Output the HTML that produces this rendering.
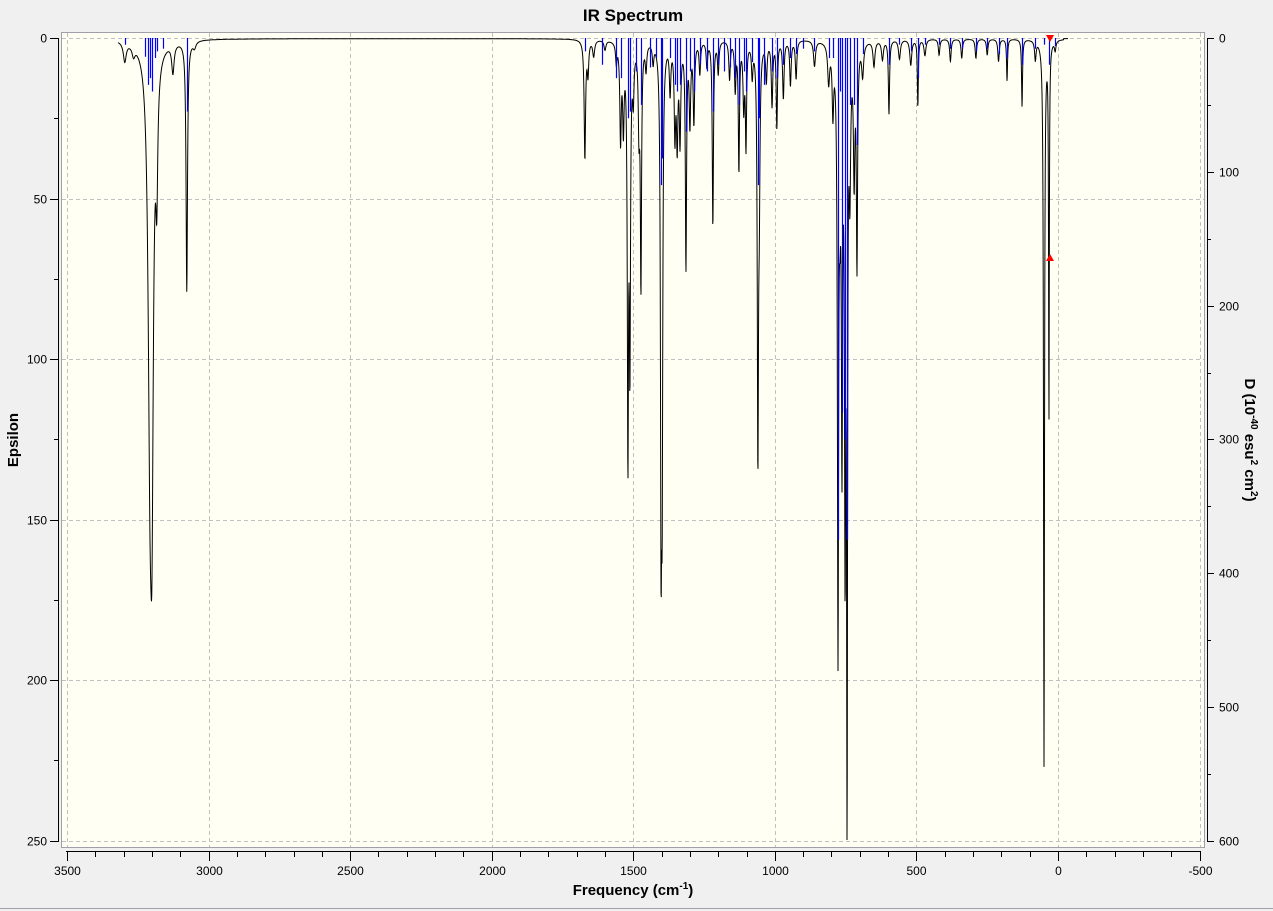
<!DOCTYPE html>
<html><head><meta charset="utf-8"><style>
html,body{margin:0;padding:0;background:#f0f0f0;width:1273px;height:911px;overflow:hidden}
svg{display:block;font-family:"Liberation Sans",sans-serif}
</style></head><body>
<svg id="s" width="1273" height="911" xmlns="http://www.w3.org/2000/svg">
<rect x="0" y="0" width="1273" height="911" fill="#f0f0f0"/>
<line x1="0" y1="908.5" x2="1273" y2="908.5" stroke="#a0a0a8" stroke-width="1"/>
<rect x="61.5" y="32.5" width="1143" height="815" fill="#fffff4" stroke="#a0a0a8" stroke-width="1"/>
<g id="grid" stroke="#c0c0c0" stroke-dasharray="4,3" stroke-width="1"></g>
<path id="curve" fill="none" stroke="#000" stroke-width="1"/>
<g id="sticks" stroke="#0000ff" stroke-width="1.2"></g>
<polygon points="1046,35 1054,35 1050,42" fill="#ff0000"/>
<polygon points="1046,261 1054,261 1050,254" fill="#ff0000"/>
<g id="axes" stroke="#000" stroke-width="1"></g>
<g id="labels" font-size="12" fill="#000"></g>
<text x="633" y="21" font-size="17" font-weight="bold" text-anchor="middle">IR Spectrum</text>
<text x="633" y="895" font-size="15" font-weight="bold" text-anchor="middle">Frequency (cm<tspan dy="-6" font-size="10">-1</tspan><tspan dy="6">)</tspan></text>
<text transform="translate(18,440) rotate(-90)" font-size="15" font-weight="bold" text-anchor="middle">Epsilon</text>
<text transform="translate(1245,440) rotate(90)" font-size="15" font-weight="bold" text-anchor="middle">D (10<tspan dy="-6" font-size="10">-40</tspan><tspan dy="6"> esu</tspan><tspan dy="-6" font-size="10">2</tspan><tspan dy="6"> cm</tspan><tspan dy="-6" font-size="10">2</tspan><tspan dy="6">)</tspan></text>
</svg>
<script>
var NS="http://www.w3.org/2000/svg";
function X(f){return 1058-f*0.28314;}
function YL(e){return 38+e*3.21;}
function YR(d){return 38+d*1.338;}
function el(p,t,a,txt){var e=document.createElementNS(NS,t);for(var k in a)e.setAttribute(k,a[k]);if(txt!=null)e.textContent=txt;document.getElementById(p).appendChild(e);}
for(var f=3500;f>=-500;f-=500){var x=Math.round(X(f))+0.5;el("grid","line",{x1:x,y1:33,x2:x,y2:847});}
for(var e=0;e<=250;e+=50){var y=Math.round(YL(e))+0.5;el("grid","line",{x1:62,y1:y,x2:1204,y2:y});}
el("axes","line",{x1:58.5,y1:38,x2:58.5,y2:842});
for(var e=0;e<=250;e+=50){var y=Math.round(YL(e))+0.5;el("axes","line",{x1:50,y1:y,x2:58,y2:y});el("labels","text",{x:47,y:y+4,"text-anchor":"end"},String(e));}
for(var e=25;e<=250;e+=50){var y=Math.round(YL(e))+0.5;el("axes","line",{x1:54,y1:y,x2:58,y2:y});}
el("axes","line",{x1:1207.5,y1:38,x2:1207.5,y2:842});
for(var d=0;d<=600;d+=50){var y=Math.round(YR(d))+0.5;el("axes","line",{x1:1207,y1:y,x2:d%100==0?1214:1211,y2:y});if(d%100==0)el("labels","text",{x:1219,y:y+4},String(d));}
el("axes","line",{x1:66,y1:851.5,x2:1200,y2:851.5});
for(var f=3500;f>=-500;f-=100){var x=Math.round(X(f))+0.5;el("axes","line",{x1:x,y1:851,x2:x,y2:f%500==0?861:857});if(f%500==0)el("labels","text",{x:x,y:875,"text-anchor":"middle"},String(f));}
var P=[[3296,6,6],[3265,3,6],[3207,110,8],[3200,105,6],[3183,35,4],[3126,9,5],[3077,78,3],[3050,2,6],
[1671,37,3],[1660,10,3],[1640,5,4],[1600,3,4],[1560,6,3],[1545,30,3],[1535,25,3],[1519,125,2.5],[1512,95,2.5],[1500,15,3],[1480,25,3],[1473,75,2.5],[1455,8,3],[1430,6,3],
[1402,140,2.5],[1398,120,2.5],[1370,15,3],[1353,28,3],[1345,30,3],[1335,30,3],[1314,70,2.5],[1300,25,3],[1286,25,3],[1265,10,3],[1240,8,3],[1219,58,2.5],[1200,10,3],
[1160,12,3],[1140,15,3],[1127,40,2.5],[1110,20,3],[1102,32,2.5],[1080,10,3],[1060,125,2.5],[1055,40,3],[1030,12,3],[1010,20,3],[993,27,2.5],[970,18,3],[945,14,3],[925,12,3],
[860,8,4],[810,12,4],[795,20,3],[777,185,2.5],[770,30,3],[763,120,2.5],[752,150,2.5],[745,230,2],[735,40,3],[720,40,3],[710,68,2.5],[690,10,4],[650,8,4],[620,6,4],
[597,23,2.5],[560,6,4],[520,8,4],[495,21,2],[470,5,4],[420,5,3],[380,7,3],[340,6,3],[290,6,3],[250,5,3],[210,7,3],[180,13,2],[127,21,2],[80,6,3],[49.4,226,2],[32,118,1.5],[10,3,3]];
var d="";
for(var x=118;x<=1068;x+=0.25){var f=(1058-x)/0.28314,s=0;for(var i=0;i<P.length;i++){var w=P[i][2],q=(f-P[i][0])/w;s+=P[i][1]/(1+q*q);}
if(f>3330||f<-20)s=0;
var y=YL(s+0.2);if(y>840)y=840;d+=(d?"L":"M")+x.toFixed(2)+" "+y.toFixed(1);}
document.getElementById("curve").setAttribute("d",d);
var S=[[3296,5],[3225,14],[3215,35],[3207,30],[3200,40],[3190,15],[3183,10],[3160,8],[3077,55],[1671,10],[1610,20],[1560,30],[1545,30],[1519,60],[1512,55],[1490,25],[1473,50],[1440,22],[1420,15],[1402,110],[1398,90],[1370,15],[1353,35],[1345,40],[1335,35],[1314,70],[1300,25],[1286,40],[1265,20],[1240,25],[1219,55],[1200,20],[1180,25],[1160,22],[1140,30],[1127,50],[1110,25],[1102,40],[1080,18],[1060,110],[1055,60],[1040,35],[1010,25],[993,30],[970,20],[945,15],[925,12],[900,8],[860,10],[810,15],[795,15],[777,375],[770,40],[763,280],[752,300],[745,375],[735,50],[720,50],[710,80],[690,12],[597,20],[560,5],[520,10],[495,30],[470,5],[420,5],[380,8],[340,8],[290,10],[250,8],[210,12],[180,15],[127,20],[80,8],[49,5],[32,20],[10,6]];
for(var i=0;i<S.length;i++){var x=Math.round(X(S[i][0]))+0.5;el("sticks","line",{x1:x,y1:38,x2:x,y2:YR(S[i][1])});}
</script>
</body></html>
